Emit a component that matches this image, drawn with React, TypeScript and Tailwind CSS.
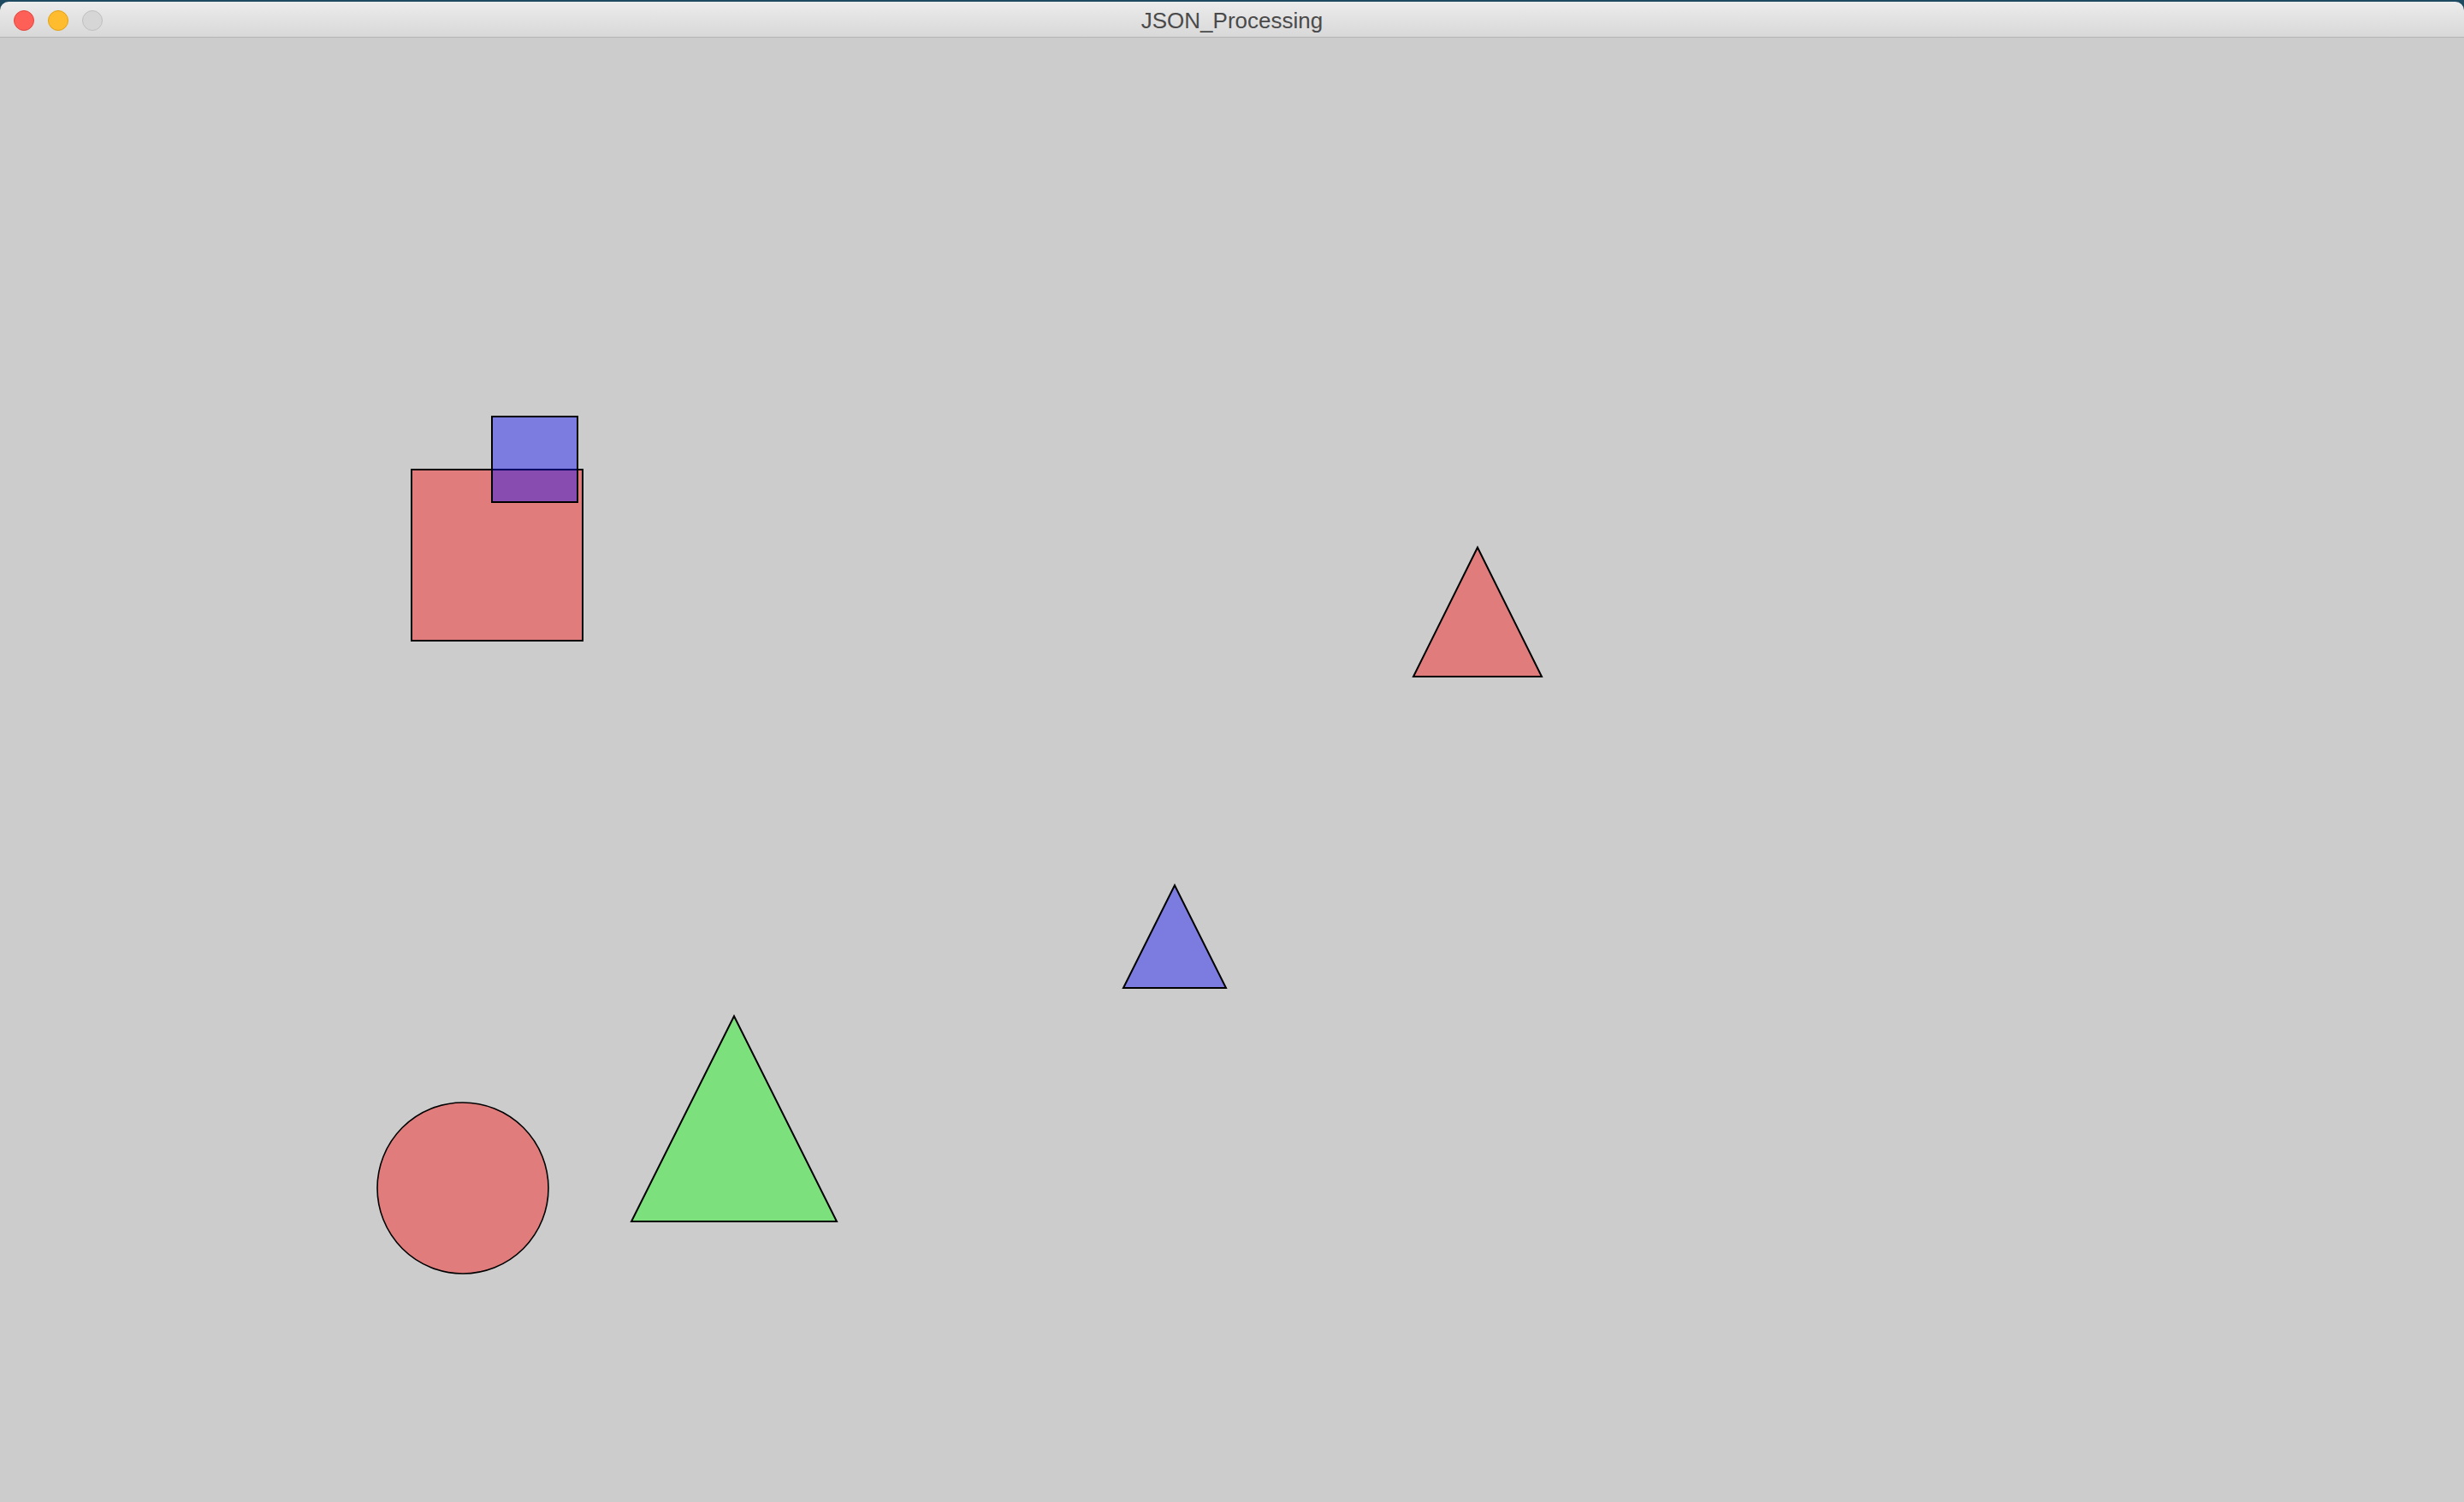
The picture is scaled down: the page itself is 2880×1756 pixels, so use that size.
type Shape =
  | { kind: 'rect'; x: number; y: number; size: number; fill: string }
  | { kind: 'circle'; cx: number; cy: number; r: number; fill: string }
  | { kind: 'tri'; points: string; fill: string };

const RED = 'rgba(255,0,0,0.392)';
const GREEN = 'rgba(0,255,0,0.392)';
const BLUE = 'rgba(0,0,255,0.392)';

// canvas coordinates (canvas starts just under the title bar)
const shapes: Shape[] = [
  { kind: 'rect', x: 481, y: 505, size: 200, fill: RED },
  { kind: 'rect', x: 575, y: 443, size: 100, fill: BLUE },
  { kind: 'circle', cx: 541, cy: 1345, r: 100, fill: RED },
  { kind: 'tri', points: '858,1144 738,1384 978,1384', fill: GREEN },
  { kind: 'tri', points: '1373,991 1313,1111 1433,1111', fill: BLUE },
  { kind: 'tri', points: '1727,596 1652,747 1802,747', fill: RED },
];

function TrafficLights() {
  return (
    <div className="flex items-center gap-[16px] pl-[16px] pt-[2px]">
      <span className="block h-[24px] w-[24px] rounded-full bg-[#fe5f57] border border-[#e2463f]" />
      <span className="block h-[24px] w-[24px] rounded-full bg-[#febc2e] border border-[#e1a116]" />
      <span className="block h-[24px] w-[24px] rounded-full bg-[#d6d6d6] border border-[#bfbfbf]" />
    </div>
  );
}

export default function App() {
  return (
    <div className="h-screen w-full bg-[#1e4a61] pt-[2px] overflow-hidden">
      <div className="flex h-full flex-col rounded-t-[10px] overflow-hidden">
        <div className="grid h-[42px] shrink-0 grid-cols-[1fr_auto_1fr] items-center border-b border-[#b4b4b4] bg-gradient-to-b from-[#ececec] to-[#d8d8d8]">
          <TrafficLights />
          <div
            className="text-[26px] leading-none text-[#4a4a4a] pt-[3px]"
            style={{ fontFamily: '"Liberation Sans", Arial, sans-serif' }}
          >
            JSON_Processing
          </div>
          <div />
        </div>

        <div className="relative flex-1 bg-[#cccccc]">
          <svg className="absolute inset-0 h-full w-full" xmlns="http://www.w3.org/2000/svg">
            {shapes.map((s, i) => {
              if (s.kind === 'rect') {
                return (
                  <rect
                    key={i}
                    x={s.x}
                    y={s.y}
                    width={s.size}
                    height={s.size}
                    fill={s.fill}
                    stroke="#000"
                    strokeWidth={2}
                  />
                );
              }
              if (s.kind === 'circle') {
                return <circle key={i} cx={s.cx} cy={s.cy} r={s.r} fill={s.fill} stroke="#000" strokeWidth={1.6} />;
              }
              return (
                <polygon key={i} points={s.points} fill={s.fill} stroke="#000" strokeWidth={2} strokeLinejoin="miter" />
              );
            })}
          </svg>
        </div>
      </div>
    </div>
  );
}
